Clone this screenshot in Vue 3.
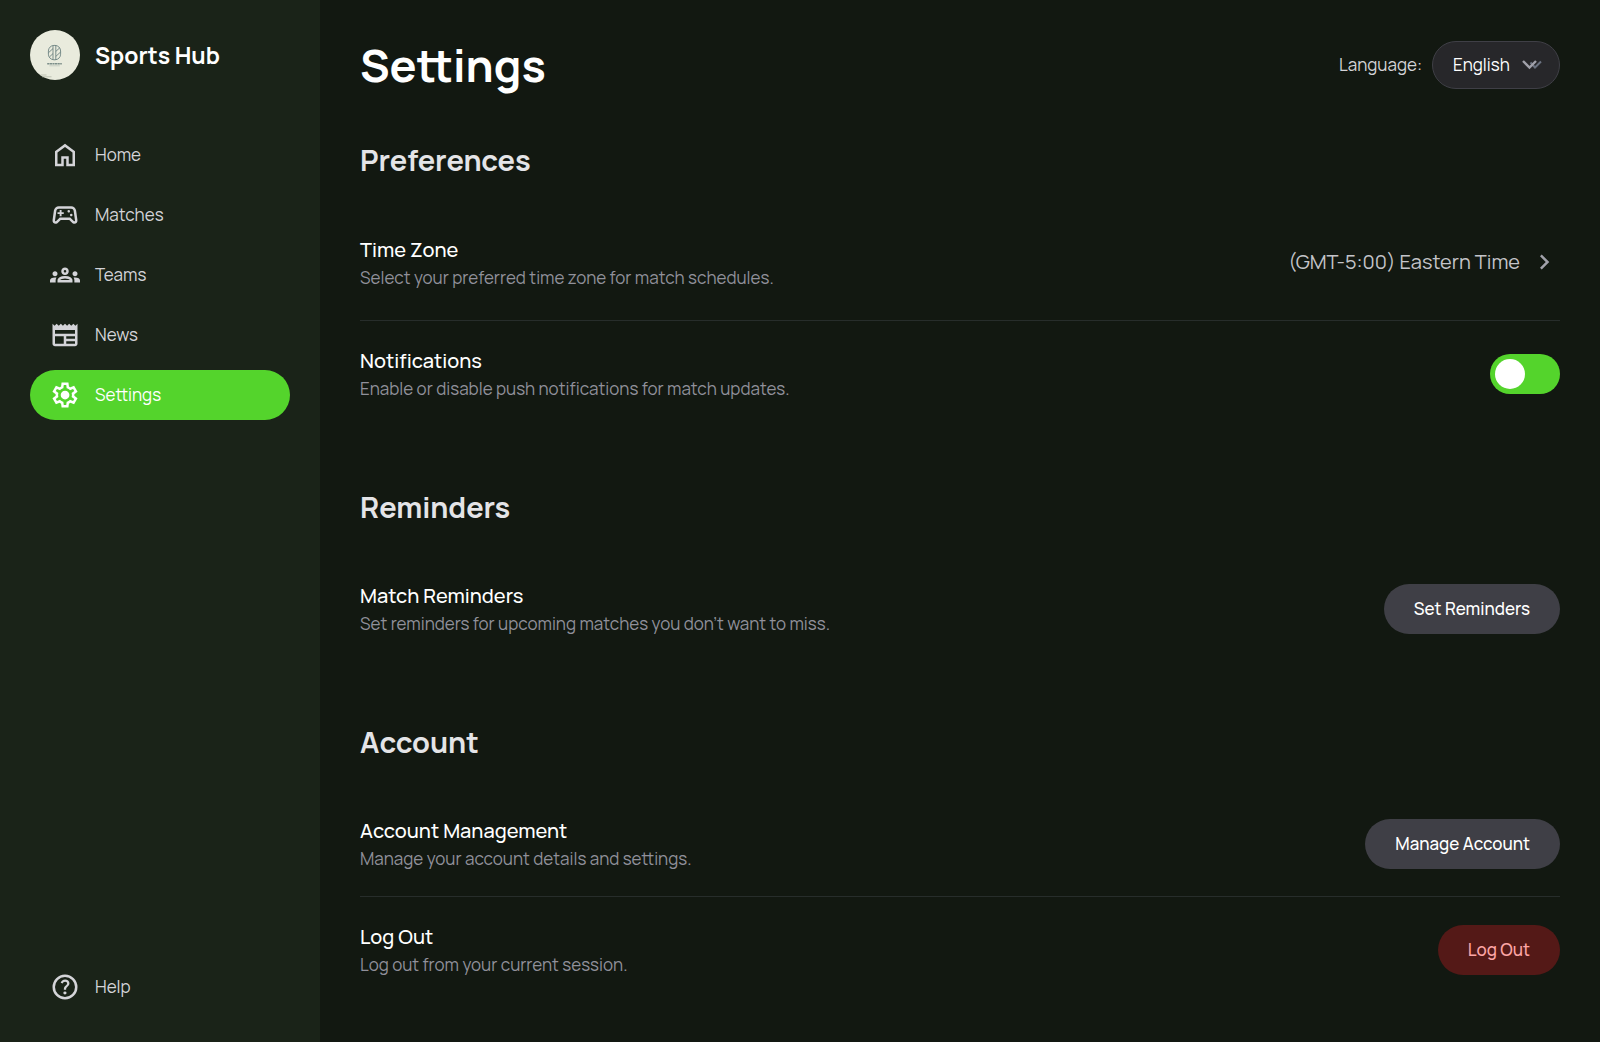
<script setup>
import { ref } from 'vue'

const navItems = [
  {
    label: 'Home',
    path: 'M240-200h120v-240h240v240h120v-360L480-740 240-560v360Zm-80 80v-480l320-240 320 240v480H520v-240h-80v240H160Z',
  },
  {
    label: 'Matches',
    path: 'M182-200q-51 0-79-35.5T82-322l42-300q9-60 53.5-99T282-760h396q60 0 104.5 39t53.5 99l42 300q7 51-21 86.5T778-200q-21 0-39-7.5T706-230l-90-90H344l-90 90q-15 15-33 22.5t-39 7.5Zm16-86 114-114h336l114 114q2 2 16 6 11 0 17.5-6.5T800-304l-44-308q-4-29-26-48.5T678-680H282q-30 0-52 19.5T204-612l-44 308q-2 11 4.5 17.5T182-280q2 0 16-6Zm482-154q17 0 28.5-11.5T720-480q0-17-11.5-28.5T680-520q-17 0-28.5 11.5T640-480q0 17 11.5 28.5T680-440Zm-80-120q17 0 28.5-11.5T640-600q0-17-11.5-28.5T600-640q-17 0-28.5 11.5T560-600q0 17 11.5 28.5T600-560ZM310-440h60v-70h70v-60h-70v-70h-60v70h-70v60h70v70Z',
  },
  {
    label: 'Teams',
    path: 'M0-240v-63q0-43 44-70t116-27q13 0 25 .5t23 2.5q-14 21-21 44t-7 48v65H0Zm240 0v-65q0-32 17.5-58.5T307-410q32-20 76.5-30t96.5-10q53 0 97.5 10t76.5 30q32 20 49 46.5t17 58.5v65H240Zm540 0v-65q0-26-6.5-49T754-397q11-2 22.5-2.5t23.5-.5q72 0 116 26.5t44 70.5v63H780Zm-455-80h311q-10-20-55.5-35T480-370q-55 0-100.5 15T325-320ZM160-440q-33 0-56.5-23.5T80-520q0-34 23.5-57t56.5-23q34 0 57 23t23 57q0 33-23 56.5T160-440Zm640 0q-33 0-56.5-23.5T720-520q0-34 23.5-57t56.5-23q34 0 57 23t23 57q0 33-23 56.5T800-440Zm-320-40q-50 0-85-35t-35-85q0-51 35-85.5t85-34.5q51 0 85.5 34.5T600-600q0 50-34.5 85T480-480Zm0-80q17 0 28.5-11.5T520-600q0-17-11.5-28.5T480-640q-17 0-28.5 11.5T440-600q0 17 11.5 28.5T480-560Z',
  },
  {
    label: 'News',
    path: 'M160-120q-33 0-56.5-23.5T80-200v-640l67 67 66-67 67 67 67-67 66 67 67-67 67 67 66-67 67 67 67-67 66 67 67-67v640q0 33-23.5 56.5T800-120H160Zm0-80h280v-240H160v240Zm360 0h280v-80H520v80Zm0-160h280v-80H520v80ZM160-520h640v-120H160v120Z',
  },
  {
    label: 'Settings',
    active: true,
    path: 'm370-80-16-128q-13-5-24.5-12T307-235l-119 50L78-375l103-78q-1-7-1-13.5v-27q0-6.5 1-13.5L78-585l110-190 119 50q11-8 23-15t24-12l16-128h220l16 128q13 5 24.5 12t22.5 15l119-50 110 190-103 78q1 7 1 13.5v27q0 6.5-2 13.5l103 78-110 190-118-50q-11 8-23 15t-24 12L590-80H370Zm70-80h79l14-106q31-8 57.5-23.5T639-327l99 41 39-68-86-65q5-14 7-29.5t2-31.5q0-16-2-31.5t-7-29.5l86-65-39-68-99 42q-22-23-48.5-38.5T533-694l-13-106h-79l-14 106q-31 8-57.5 23.5T321-633l-99-41-39 68 86 64q-5 15-7 30t-2 32q0 16 2 31t7 30l-86 65 39 68 99-42q22 23 48.5 38.5T427-266l13 106Zm42-180q58 0 99-41t41-99q0-58-41-99t-99-41q-59 0-99.5 41T342-480q0 58 40.5 99t99.5 41Zm-2-140Z',
  },
]

const helpPath =
  'M478-240q21 0 35.5-14.5T528-290q0-21-14.5-35.5T478-340q-21 0-35.5 14.5T428-290q0 21 14.5 35.5T478-240Zm-36-154h74q0-33 7.5-52t42.5-52q26-26 41-49.5t15-56.5q0-56-41-86t-97-30q-57 0-92.5 30T342-618l66 26q5-18 22.5-39t53.5-21q32 0 48 17.5t16 38.5q0 20-12 37.5T506-526q-44 39-54 59t-10 73Zm38 314q-83 0-156-31.5T197-197q-54-54-85.5-127T80-480q0-83 31.5-156T197-763q54-54 127-85.5T480-880q83 0 156 31.5T763-763q54 54 85.5 127T880-480q0 83-31.5 156T763-197q-54 54-127 85.5T480-80Zm0-80q134 0 227-93t93-227q0-134-93-227t-227-93q-134 0-227 93t-93 227q0 134 93 227t227 93Z'

const language = ref('English')
const notifications = ref(false)
</script>

<template>
  <div class="app">
    <aside class="sidebar">
      <div class="brand">
        <svg class="logo" viewBox="0 0 50 50" aria-hidden="true">
          <circle cx="25" cy="25" r="25" fill="#e9ebdd" />
          <g fill="none" stroke="#5f7777" stroke-width="0.8">
            <rect x="18.4" y="15.4" width="12.2" height="14.4" rx="5.6" />
            <path d="M23 15.8v13.6M25.8 15.4v14.4M18.6 22.6l4.4-4M19.4 27l3.6-3.4M25.8 21.4l4-3.6M25.8 26.4l4.8-4.4" />
          </g>
          <path d="M17.2 33.8h14.6" stroke="#7d8f8a" stroke-width="1.4" stroke-dasharray="2.2 0.4" />
          <path d="M19.4 35.8h10.4" stroke="#b9c1b6" stroke-width="0.7" />
          <path d="M10.5 45h6M12 46.8h9.5" stroke="#b4b9aa" stroke-width="0.8" />
        </svg>
        <span class="brand-name">Sports Hub</span>
      </div>

      <nav class="nav" aria-label="Main">
        <a
          v-for="item in navItems"
          :key="item.label"
          href="#"
          class="nav-link"
          :class="{ active: item.active }"
          :aria-current="item.active ? 'page' : null"
        >
          <svg class="icon" viewBox="0 -960 960 960" aria-hidden="true"><path :d="item.path" /></svg>
          <span>{{ item.label }}</span>
        </a>
      </nav>

      <a href="#" class="nav-link">
        <svg class="icon" viewBox="0 -960 960 960" aria-hidden="true"><path :d="helpPath" /></svg>
        <span>Help</span>
      </a>
    </aside>

    <main class="main">
      <header class="header">
        <h1>Settings</h1>
        <div class="language">
          <label for="language">Language:</label>
          <div class="select-wrap">
            <select id="language" v-model="language">
              <option>English</option>
              <option>Spanish</option>
              <option>French</option>
            </select>
            <svg class="select-arrow" viewBox="0 0 20 10" aria-hidden="true">
              <g fill="none" stroke-width="2">
                <path d="M8.5 2.5l4.5 5L19 1.5" stroke="#6b7280" />
                <path d="M1 1l6.5 6.5L14 1" stroke="#a1a1aa" stroke-width="2.4" />
              </g>
            </svg>
          </div>
        </div>
      </header>

      <div class="sections">
        <section>
          <h2>Preferences</h2>
          <div class="row tall">
            <div class="info">
              <h3>Time Zone</h3>
              <p>Select your preferred time zone for match schedules.</p>
            </div>
            <button type="button" class="zone">
              <span>(GMT-5:00) Eastern Time</span>
              <svg class="icon" viewBox="0 -960 960 960" aria-hidden="true">
                <path d="M504-480 320-664l56-56 240 240-240 240-56-56 184-184Z" />
              </svg>
            </button>
          </div>
          <div class="row">
            <div class="info">
              <h3><label for="notifications">Notifications</label></h3>
              <p>Enable or disable push notifications for match updates.</p>
            </div>
            <input id="notifications" v-model="notifications" type="checkbox" role="switch" class="toggle" />
          </div>
        </section>

        <section>
          <h2>Reminders</h2>
          <div class="row">
            <div class="info">
              <h3>Match Reminders</h3>
              <p>Set reminders for upcoming matches you don’t want to miss.</p>
            </div>
            <button type="button" class="btn">Set Reminders</button>
          </div>
        </section>

        <section>
          <h2>Account</h2>
          <div class="row">
            <div class="info">
              <h3>Account Management</h3>
              <p>Manage your account details and settings.</p>
            </div>
            <button type="button" class="btn">Manage Account</button>
          </div>
          <div class="row">
            <div class="info">
              <h3>Log Out</h3>
              <p>Log out from your current session.</p>
            </div>
            <button type="button" class="btn danger">Log Out</button>
          </div>
        </section>
      </div>
    </main>
  </div>
</template>

<style>
body {
  margin: 0;
  background: #121811;
}
</style>

<style scoped>
* {
  box-sizing: border-box;
}

.app {
  display: flex;
  min-height: 100vh;
  background: #121811;
  color: #fff;
  font-family: Manrope, Inter, 'Liberation Sans', sans-serif;
  font-size: 17px;
  line-height: 24px;
}

h1,
h2,
h3,
p {
  margin: 0;
}

.sidebar {
  display: flex;
  flex-direction: column;
  flex: none;
  width: 320px;
  padding: 30px;
  background: #1a2318;
}

.brand {
  display: flex;
  align-items: center;
  gap: 15px;
  margin-bottom: 50px;
}

.logo {
  width: 50px;
  height: 50px;
}

.brand-name {
  font-size: 23px;
  font-weight: 700;
}

.nav {
  display: flex;
  flex: 1;
  flex-direction: column;
  gap: 10px;
}

.nav-link {
  display: flex;
  align-items: center;
  gap: 15px;
  height: 50px;
  padding: 0 20px;
  border-radius: 25px;
  color: #d4d4d8;
  text-decoration: none;
}

.nav-link.active {
  background: #54d42c;
  color: #fff;
}

.icon {
  flex: none;
  width: 30px;
  height: 30px;
  fill: currentColor;
}

.main {
  flex: 1;
  min-width: 0;
  padding: 40px;
}

.header {
  display: flex;
  align-items: center;
  justify-content: space-between;
  height: 50px;
  margin-bottom: 51px;
}

h1 {
  font-size: 45px;
  font-weight: 700;
  line-height: 50px;
}

.language {
  display: flex;
  align-items: center;
  gap: 10px;
  color: #d4d4d8;
}

.select-wrap {
  position: relative;
}

select {
  width: 128px;
  height: 48px;
  padding: 0 20px;
  appearance: none;
  border: 1px solid #3f3f46;
  border-radius: 24px;
  background: #27272a;
  color: #fff;
  font: inherit;
}

.select-arrow {
  position: absolute;
  top: 19px;
  right: 18px;
  width: 20px;
  height: 10px;
  pointer-events: none;
}

.sections {
  display: flex;
  flex-direction: column;
  gap: 62px;
}

h2 {
  margin-bottom: 30px;
  color: #e4e4e7;
  font-size: 29px;
  font-weight: 700;
  line-height: 38px;
}

.row {
  display: flex;
  align-items: center;
  justify-content: space-between;
  gap: 20px;
  padding: 25px 0;
}

.row.tall {
  padding-bottom: 30px;
}

.row + .row {
  border-top: 1px solid #272d2b;
}

h3 {
  font-size: 20px;
  font-weight: 500;
  line-height: 30px;
}

p {
  color: #90909a;
  line-height: 25px;
}

.zone {
  display: flex;
  align-items: center;
  gap: 10px;
  height: 56px;
  padding: 0;
  border: 0;
  background: none;
  color: #c4c4c9;
  font: inherit;
  font-size: 20px;
}

.zone .icon {
  color: #a1a1aa;
}

.toggle {
  display: flex;
  align-items: center;
  width: 70px;
  height: 40px;
  margin: 0;
  padding: 5px;
  appearance: none;
  border-radius: 20px;
  background: #54d42c;
}

.toggle::before {
  width: 30px;
  height: 30px;
  border-radius: 50%;
  background: #fff;
  content: '';
}

.toggle:checked {
  justify-content: flex-end;
}

.btn {
  height: 50px;
  padding: 0 30px;
  border: 0;
  border-radius: 25px;
  background: #3f3f46;
  color: #fff;
  font: inherit;
  font-weight: 500;
}

.btn.danger {
  background: #541917;
  color: #fca5a5;
}
</style>
